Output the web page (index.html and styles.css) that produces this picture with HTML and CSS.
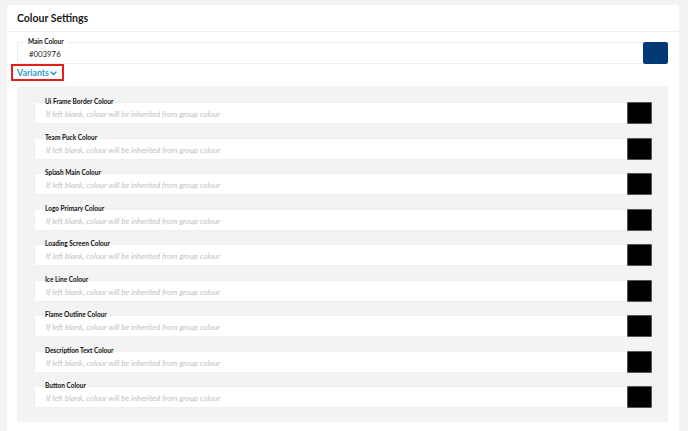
FILE: index.html
```html
<!DOCTYPE html>
<html>
<head>
<meta charset="utf-8">
<title>Colour Settings</title>
<link rel="stylesheet" href="styles.css">
</head>
<body>
<div class="card">
  <div class="card-header">Colour Settings</div>
  <div class="card-body">
    <div class="field-row main-row">
      <div class="field">
        <span class="field-label">Main Colour</span>
        <span class="field-value">#003976</span>
      </div>
      <div class="swatch swatch-main"></div>
    </div>
    <div class="variants-toggle">Variants<svg class="chev" viewBox="0 0 10 10" width="7" height="7"><path d="M1.5 3 L5 6.5 L8.5 3" fill="none" stroke="currentColor" stroke-width="2.2" stroke-linecap="round" stroke-linejoin="round"/></svg></div>
    <div class="variants-panel">
      <div class="field-row"><div class="field"><span class="field-label">Ui Frame Border Colour</span><span class="placeholder">If left blank, colour will be inherited from group colour</span></div><div class="swatch"></div></div>
      <div class="field-row"><div class="field"><span class="field-label">Team Puck Colour</span><span class="placeholder">If left blank, colour will be inherited from group colour</span></div><div class="swatch"></div></div>
      <div class="field-row"><div class="field"><span class="field-label">Splash Main Colour</span><span class="placeholder">If left blank, colour will be inherited from group colour</span></div><div class="swatch"></div></div>
      <div class="field-row"><div class="field"><span class="field-label">Logo Primary Colour</span><span class="placeholder">If left blank, colour will be inherited from group colour</span></div><div class="swatch"></div></div>
      <div class="field-row"><div class="field"><span class="field-label">Loading Screen Colour</span><span class="placeholder">If left blank, colour will be inherited from group colour</span></div><div class="swatch"></div></div>
      <div class="field-row"><div class="field"><span class="field-label">Ice Line Colour</span><span class="placeholder">If left blank, colour will be inherited from group colour</span></div><div class="swatch"></div></div>
      <div class="field-row"><div class="field"><span class="field-label">Flame Outline Colour</span><span class="placeholder">If left blank, colour will be inherited from group colour</span></div><div class="swatch"></div></div>
      <div class="field-row"><div class="field"><span class="field-label">Description Text Colour</span><span class="placeholder">If left blank, colour will be inherited from group colour</span></div><div class="swatch"></div></div>
      <div class="field-row"><div class="field"><span class="field-label">Button Colour</span><span class="placeholder">If left blank, colour will be inherited from group colour</span></div><div class="swatch"></div></div>
    </div>
  </div>
</div>
</body>
</html>
```
FILE: styles.css
```css
html, body {
  margin: 0;
  padding: 0;
  background: #f3f3f3;
  font-family: Lato, "Open Sans", "Liberation Sans", sans-serif;
  color: #1a1a1a;
}

.card {
  margin: 5px 9px 0 7px;
  background: #fff;
  border-radius: 3px;
  min-height: 440px;
}

.card-header {
  height: 26px;
  padding-left: 10px;
  display: flex;
  align-items: center;
  font-size: 10.5px;
  font-weight: 700;
  border-bottom: 1px solid #eeeeee;
}

.card-body {
  padding: 10px 11px 10px 10px;
}

.field-row {
  display: flex;
  height: 22px;
}

.field {
  flex: 1;
  position: relative;
  background: #fff;
  border: 1px solid #eeeeee;
  border-right: none;
  display: flex;
  align-items: center;
  padding-left: 11px;
  box-sizing: border-box;
}

.field-label {
  position: absolute;
  top: -5px;
  left: 6px;
  padding: 0 4px;
  font-size: 6.5px;
  font-weight: 700;
  line-height: 8px;
  color: #111;
  background: #fff;
}

.field-value {
  font-size: 7.8px;
  color: #222;
  padding-top: 2px;
}

.placeholder {
  font-size: 7.9px;
  font-style: italic;
  color: #c2c2c2;
  padding-top: 2px;
}

.swatch {
  width: 25px;
  height: 22px;
  background: #000;
  border-radius: 2px;
  box-shadow: inset 0 0 0 1px #555;
}

.swatch-main {
  background: #003976;
  box-shadow: none;
}

.variants-toggle {
  display: flex;
  width: fit-content;
  align-items: center;
  gap: 1px;
  margin-left: -6px;
  padding: 2px 5px 2px 4px;
  border: 2px solid #e3201b;
  color: #2b9fd1;
  font-size: 8.8px;
  font-weight: 700;
  line-height: 9px;
}

.chev {
  margin-top: 1px;
}

.variants-panel {
  margin-top: 5px;
  background: #f3f3f3;
  border-radius: 3px;
  padding: 16px 16px 14px 17px;
  display: flex;
  flex-direction: column;
  gap: 13.5px;
}

.variants-panel .field {
  border-color: #f0f0f0;
}

.variants-panel .field-label {
  background: transparent;
}
```
